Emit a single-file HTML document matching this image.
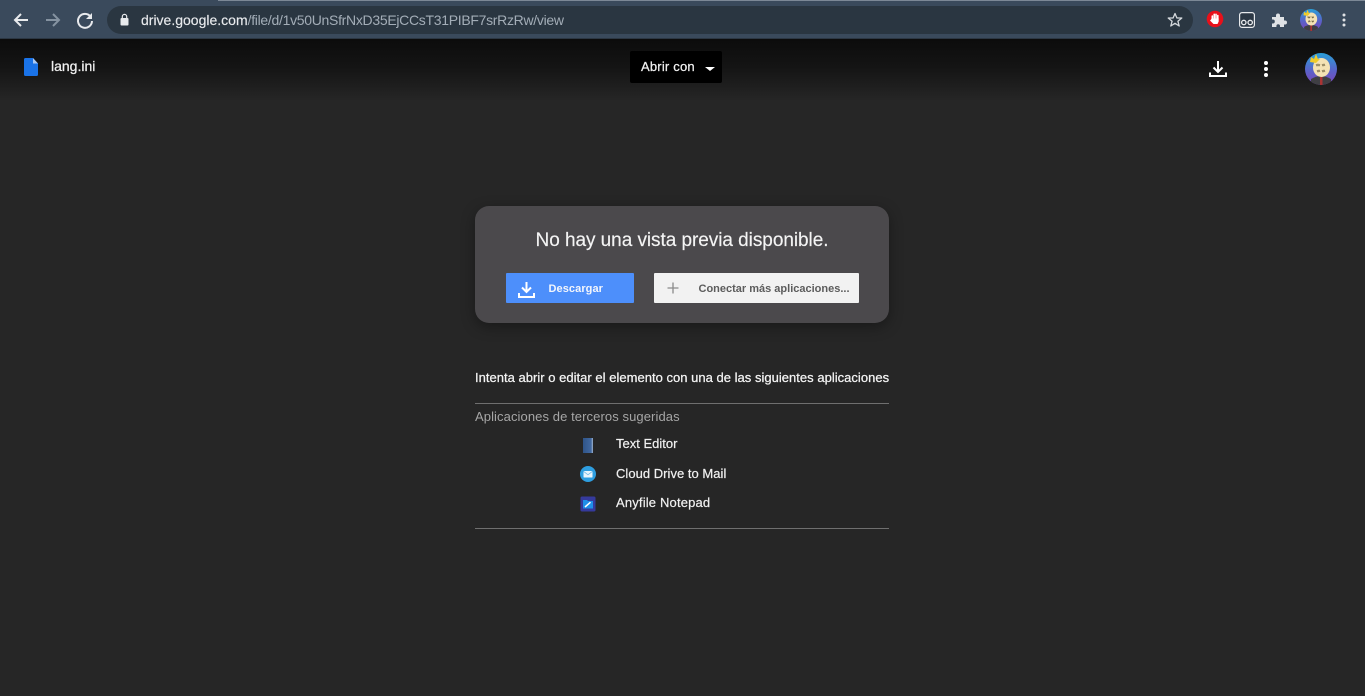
<!DOCTYPE html>
<html lang="es">
<head>
<meta charset="utf-8">
<title>lang.ini</title>
<style>
html,body{margin:0;padding:0;width:1365px;height:696px;overflow:hidden;background:#262626;font-family:"Liberation Sans",sans-serif;}
.t{position:absolute;white-space:nowrap;line-height:1;}
.a{position:absolute;}
svg{position:absolute;display:block;overflow:visible;}
</style>
</head>
<body>
<div class="a" style="left:0;top:0;width:1365px;height:39px;background:#3a4a5c;"></div>
<div class="a" style="left:218px;top:0;width:1147px;height:1px;background:#7c8896;"></div>
<div class="a" style="left:0;top:38px;width:1365px;height:1px;background:#2c3743;"></div>
<div class="a" style="left:107px;top:6px;width:1086px;height:28px;border-radius:14px;background:#2a3641;"></div>

<svg style="left:11px;top:10px" width="20" height="20" viewBox="0 0 20 20"><path d="M17 10H4M10 4L4 10L10 16" fill="none" stroke="#e8eaed" stroke-width="2"/></svg>
<svg style="left:43px;top:10px" width="20" height="20" viewBox="0 0 20 20"><path d="M3 10H16M10 4L16 10L10 16" fill="none" stroke="#8593a1" stroke-width="2"/></svg>
<svg style="left:75px;top:10px" width="20" height="20" viewBox="0 0 20 20"><path d="M15.5 6.5A7 7 0 1 0 17 11" fill="none" stroke="#e8eaed" stroke-width="2"/><path d="M17 3V9H11Z" fill="#e8eaed"/></svg>
<svg style="left:119px;top:13px" width="12" height="14" viewBox="0 0 12 14"><rect x="1.5" y="5" width="8" height="7.5" rx="1" fill="#e8eaed"/><path d="M3.3 5V3.6a2.2 2.2 0 0 1 4.4 0V5" fill="none" stroke="#e8eaed" stroke-width="1.2"/></svg>

<div class="t" style="left:141px;top:13px;font-size:14px;color:#e8eaed;-webkit-text-stroke:.15px #e8eaed">drive.google.com<span style="color:#a3adb7;letter-spacing:-.3px;-webkit-text-stroke:0">/file/d/1v50UnSfrNxD35EjCCsT31PIBF7srRzRw/view</span></div>

<svg style="left:1167px;top:12px" width="16" height="16" viewBox="0 0 16 16"><path d="M8 1.500L9.900 6H14.800L10.900 9.200L12.200 14L8 11.300L3.800 14L5.100 9.200L1.200 6H6.100Z" fill="none" stroke="#d5d9dd" stroke-width="1.300" stroke-linejoin="round"/></svg>

<svg style="left:1206px;top:10px" width="18" height="18" viewBox="0 0 18 18"><circle cx="9" cy="9" r="8.300" fill="#e8101a"/><path d="M6.300 9V6M8.200 8.500V4.300M10 8.500V4.300M11.800 9V5.500" stroke="#fff" stroke-width="1.600" stroke-linecap="round" fill="none"/><path d="M5.500 8.500H12.700V11.500L11.500 14H7.500L4 10.500L5 9.500Z" fill="#fff"/></svg>
<svg style="left:1239px;top:12px" width="16" height="16" viewBox="0 0 16 16"><rect x=".6" y=".6" width="14.800" height="14.800" rx="2.500" fill="#2c3845" stroke="#e8eaed" stroke-width="1.200"/><circle cx="4.800" cy="10.500" r="2.200" fill="none" stroke="#e8eaed" stroke-width="1.300"/><circle cx="11.200" cy="10.500" r="2.200" fill="none" stroke="#e8eaed" stroke-width="1.300"/></svg>
<svg style="left:1271px;top:12px" width="16" height="16" viewBox="0 0 16 16"><path d="M1 5H5V3.500a2 2 0 0 1 4 0V5H13V8.500h1a2 2 0 0 1 0 4H13V15H9V14a1.800 1.800 0 0 0-3.600 0V15H1V11.500h.8a2 2 0 0 0 0-4H1Z" fill="#dfe2e5"/></svg>
<svg style="left:1300px;top:9px" width="22" height="22" viewBox="0 0 32 32"><defs><linearGradient id="g1" x1="0" y1="0" x2="0" y2="1"><stop offset="0" stop-color="#2a9fd8"/><stop offset=".55" stop-color="#5a62c9"/><stop offset="1" stop-color="#7d45b8"/></linearGradient><clipPath id="c1"><circle cx="16" cy="16" r="16"/></clipPath></defs><circle cx="16" cy="16" r="16" fill="url(#g1)"/><g clip-path="url(#c1)"><path d="M6 32V26Q16 20 26 26V32Z" fill="#3f3f44"/><rect x="15" y="24" width="2.500" height="8" fill="#a33"/></g><ellipse cx="16.500" cy="14.500" rx="8.500" ry="9.500" fill="#f4e2b4"/><path d="M5 9L6 4L9 6L11 1L13 6L15 6L11 10Z" fill="#f0cc2a"/><path d="M11 11l1 2 1-2 1 2 1-2M17 11l1 2 1-2 1 2M12 17l1 2 1-2 1 2M17 17l1 2 1-2 1 2" fill="none" stroke="#6b5f3c" stroke-width=".9"/></svg>
<svg style="left:1341px;top:13px" width="6" height="14" viewBox="0 0 6 14"><circle cx="3" cy="2" r="1.500" fill="#dfe2e5"/><circle cx="3" cy="7" r="1.500" fill="#dfe2e5"/><circle cx="3" cy="12" r="1.500" fill="#dfe2e5"/></svg>

<div class="a" style="left:0;top:39px;width:1365px;height:62px;background:linear-gradient(to bottom,#0c0c0c 0%,#141414 45%,#262626 100%);"></div>

<svg style="left:24px;top:58px" width="14" height="18" viewBox="0 0 14 18"><path d="M1.500 0H9L14 5.500V16.500A1.500 1.500 0 0 1 12.500 18H1.500A1.500 1.500 0 0 1 0 16.500V1.500A1.500 1.500 0 0 1 1.500 0Z" fill="#1a73e8"/><path d="M9 0L14 5.500H9Z" fill="#a9c9f5"/></svg>
<div class="t" style="left:51px;top:59px;font-size:14px;color:#f1f1f1;-webkit-text-stroke:.25px #f1f1f1">lang.ini</div>

<div class="a" style="left:630px;top:51px;width:92px;height:32px;background:#000;border-radius:2px;"></div>
<div class="t" style="left:641px;top:60px;font-size:13px;color:#f1f1f1;-webkit-text-stroke:.25px #f1f1f1;letter-spacing:.2px">Abrir con</div>
<div class="a" style="left:705px;top:67px;width:0;height:0;border-left:5px solid transparent;border-right:5px solid transparent;border-top:4.500px solid #fff;"></div>

<svg style="left:1209px;top:60px" width="18" height="18" viewBox="0 0 18 18"><path d="M9 1V12M4.500 7.500L9 12L13.500 7.500" fill="none" stroke="#fff" stroke-width="2"/><path d="M1 12.500V16H17V12.500" fill="none" stroke="#fff" stroke-width="2"/></svg>
<svg style="left:1263px;top:60px" width="6" height="18" viewBox="0 0 6 18"><circle cx="3" cy="3" r="2" fill="#fff"/><circle cx="3" cy="9" r="2" fill="#fff"/><circle cx="3" cy="15" r="2" fill="#fff"/></svg>
<svg style="left:1305px;top:53px" width="32" height="32" viewBox="0 0 32 32"><defs><linearGradient id="g2" x1="0" y1="0" x2="0" y2="1"><stop offset="0" stop-color="#2a9fd8"/><stop offset=".55" stop-color="#5a62c9"/><stop offset="1" stop-color="#7d45b8"/></linearGradient><clipPath id="c2"><circle cx="16" cy="16" r="16"/></clipPath></defs><circle cx="16" cy="16" r="16" fill="url(#g2)"/><g clip-path="url(#c2)"><path d="M6 32V26Q16 20 26 26V32Z" fill="#3f3f44"/><rect x="15" y="24" width="2.500" height="8" fill="#a33"/></g><ellipse cx="16.500" cy="14.500" rx="8.500" ry="9.500" fill="#f4e2b4"/><path d="M5 9L6 4L9 6L11 1L13 6L15 6L11 10Z" fill="#f0cc2a"/><path d="M11 11l1 2 1-2 1 2 1-2M17 11l1 2 1-2 1 2M12 17l1 2 1-2 1 2M17 17l1 2 1-2 1 2" fill="none" stroke="#6b5f3c" stroke-width=".7"/></svg>

<div class="a" style="left:475px;top:206px;width:414px;height:117px;background:#4b494c;border-radius:14px;box-shadow:0 4px 14px rgba(0,0,0,.35);"></div>
<div class="t" style="left:475px;top:231px;width:414px;text-align:center;font-size:19px;color:#f4f4f4;-webkit-text-stroke:.15px #f4f4f4;letter-spacing:-.05px">No hay una vista previa disponible.</div>

<div class="a" style="left:506px;top:273px;width:128px;height:30px;background:#4d8ffb;border-radius:1px;"></div>
<svg style="left:518px;top:281px" width="17" height="18" viewBox="0 0 17 18"><path d="M8.500 1V11M4 6.500L8.500 11L13 6.500" fill="none" stroke="#fff" stroke-width="2"/><path d="M1 12V16H16V12" fill="none" stroke="#fff" stroke-width="2"/></svg>
<div class="t" style="left:548.500px;top:284px;font-size:11px;font-weight:bold;color:#f3f6fc;letter-spacing:.08px">Descargar</div>

<div class="a" style="left:654px;top:273px;width:205px;height:30px;background:#f2f2f2;border-radius:1px;"></div>
<svg style="left:667px;top:282px" width="12" height="12" viewBox="0 0 12 12"><path d="M6 .5V11.500M.5 6H11.500" stroke="#8a8a8a" stroke-width="1.300"/></svg>
<div class="t" style="left:698.500px;top:284px;font-size:11px;font-weight:bold;color:#5c5c5c">Conectar más aplicaciones...</div>

<div class="t" style="left:475px;top:371px;font-size:13px;color:#f4f4f4;-webkit-text-stroke:.25px #f4f4f4;letter-spacing:.02px">Intenta abrir o editar el elemento con una de las siguientes aplicaciones</div>
<div class="a" style="left:475px;top:403px;width:414px;height:1px;background:#6f6f6f;"></div>
<div class="t" style="left:475px;top:410px;font-size:13px;color:#a6a6a6;letter-spacing:.09px">Aplicaciones de terceros sugeridas</div>

<div class="a" style="left:583px;top:438px;width:10px;height:15px;background:linear-gradient(to right,#2f5488,#41689f 80%,#9fb2cc);"></div>
<div class="t" style="left:616px;top:437px;font-size:13px;color:#f1f1f1;-webkit-text-stroke:.2px #f1f1f1">Text Editor</div>

<svg style="left:580px;top:466px" width="16" height="16" viewBox="0 0 16 16"><circle cx="8" cy="8" r="8" fill="#2e9ee0"/><rect x="3.500" y="5" width="9" height="6.500" rx=".5" fill="#e9f5fc"/><path d="M3.500 5.300L8 8.800L12.500 5.300" fill="none" stroke="#6fbbe9" stroke-width=".8"/></svg>
<div class="t" style="left:616px;top:467px;font-size:13px;color:#f1f1f1;-webkit-text-stroke:.2px #f1f1f1;letter-spacing:.03px">Cloud Drive to Mail</div>

<svg style="left:580px;top:496px" width="16" height="16" viewBox="0 0 16 16"><rect width="15" height="15" x=".5" y=".5" rx="1.500" fill="#353a9c"/><path d="M3 4H7L8 5H13V12.500H3Z" fill="#1f8fe8"/><path d="M5 11L10.500 6.200" stroke="#fff" stroke-width="1.500"/></svg>
<div class="t" style="left:616px;top:496px;font-size:13px;color:#f1f1f1;-webkit-text-stroke:.2px #f1f1f1;letter-spacing:.17px">Anyfile Notepad</div>

<div class="a" style="left:475px;top:528px;width:414px;height:1px;background:#6f6f6f;"></div>
</body>
</html>
